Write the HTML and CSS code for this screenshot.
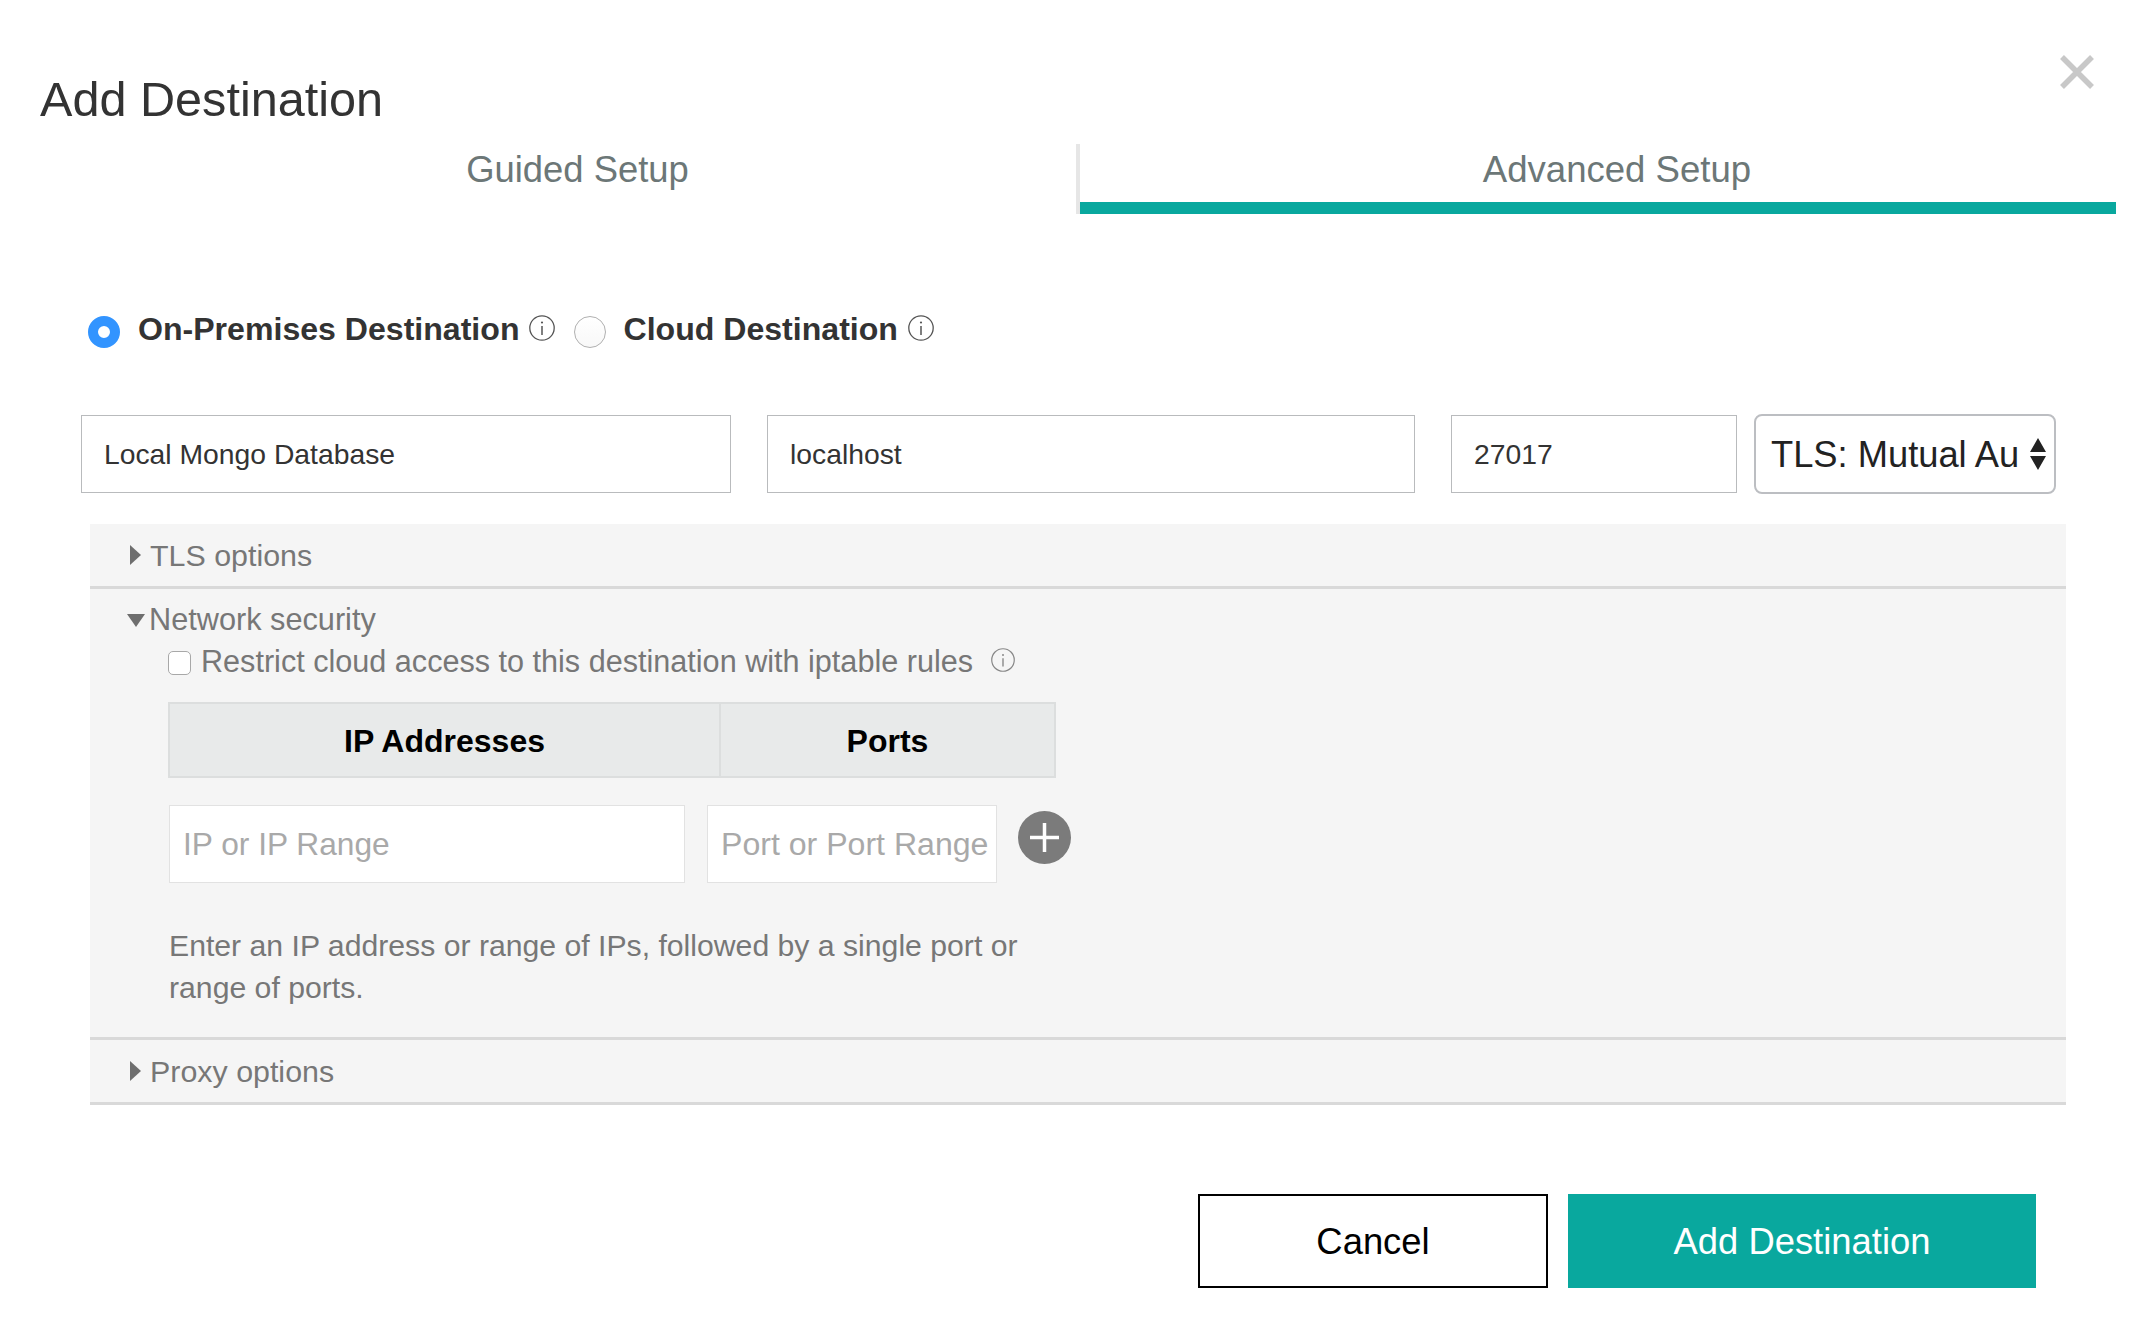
FILE: index.html
```html
<!DOCTYPE html>
<html lang="en">
<head>
  <meta charset="UTF-8" />
  <title>Add Destination</title>
  <link rel="stylesheet" href="styles.css">
</head>
<body>
  <div class="dialog">
    <button class="close-btn" aria-label="Close">
      <svg width="34" height="34" viewBox="0 0 34 34"><path d="M2 2 L32 32 M32 2 L2 32" stroke="#c8c8c8" stroke-width="5.5" fill="none"/></svg>
    </button>
    <h1 class="title">Add Destination</h1>

    <div class="tabs">
      <div class="tab tab-guided">Guided Setup</div>
      <div class="tab tab-advanced">Advanced Setup</div>
    </div>

    <div class="radio-row">
      <input class="radio" type="radio" name="kind" checked />
      <label class="radio-label">On-Premises Destination</label>
      <svg class="info" viewBox="0 0 26 26"><circle cx="13" cy="13" r="12.2" fill="none" stroke="#555" stroke-width="1.3"/><path d="M13 11 V20" stroke="#555" stroke-width="1.5"/><circle cx="13" cy="7.5" r="1.1" fill="#555"/></svg>
      <input class="radio radio-second" type="radio" name="kind" />
      <label class="radio-label">Cloud Destination</label>
      <svg class="info" viewBox="0 0 26 26"><circle cx="13" cy="13" r="12.2" fill="none" stroke="#555" stroke-width="1.3"/><path d="M13 11 V20" stroke="#555" stroke-width="1.5"/><circle cx="13" cy="7.5" r="1.1" fill="#555"/></svg>
    </div>

    <div class="fields">
      <input class="field field-name" type="text" value="Local Mongo Database" />
      <input class="field field-host" type="text" value="localhost" />
      <input class="field field-port" type="text" value="27017" />
      <div class="select-wrap">
        <select class="tls-select">
          <option>TLS: Mutual Authentication</option>
        </select>
        <svg class="select-arrows" width="18" height="32" viewBox="0 0 18 32"><path d="M9 0 L17 14 H1 Z M1 18 H17 L9 32 Z" fill="#222"/></svg>
      </div>
    </div>

    <div class="panel">
      <div class="section section-closed">
        <span class="arrow-right"></span>TLS options
      </div>

      <div class="section section-open">
        <div class="section-head"><span class="arrow-down"></span>Network security</div>
        <div class="restrict">
          <input class="check" type="checkbox" />
          <span class="restrict-text">Restrict cloud access to this destination with iptable rules</span>
          <svg class="info info-small" viewBox="0 0 26 26"><circle cx="13" cy="13" r="12.2" fill="none" stroke="#888" stroke-width="1.3"/><path d="M13 11 V20" stroke="#888" stroke-width="1.5"/><circle cx="13" cy="7.5" r="1.1" fill="#888"/></svg>
        </div>

        <div class="rules-head">
          <div class="rules-ip">IP Addresses</div>
          <div class="rules-port">Ports</div>
        </div>

        <div class="rules-inputs">
          <input class="rule-input rule-ip" type="text" placeholder="IP or IP Range" />
          <input class="rule-input rule-port" type="text" placeholder="Port or Port Range" />
          <button class="add-rule" aria-label="Add">
            <svg width="53" height="53" viewBox="0 0 53 53"><circle cx="26.5" cy="26.5" r="26.5" fill="#7b7b7b"/><path d="M26.5 12 V41 M12 26.5 H41" stroke="#fff" stroke-width="3.5"/></svg>
          </button>
        </div>

        <p class="hint">Enter an IP address or range of IPs, followed by a single port or range of ports.</p>
      </div>

      <div class="section section-closed">
        <span class="arrow-right"></span>Proxy options
      </div>
    </div>

    <div class="actions">
      <button class="btn btn-cancel">Cancel</button>
      <button class="btn btn-add">Add Destination</button>
    </div>
  </div>
</body>
</html>
```

FILE: styles.css
```css
/* Page */
body {
  margin: 0;
  background: #fff;
  font-family: "Liberation Sans", Arial, sans-serif;
  color: #333;
}

.dialog {
  position: relative;
  width: 2154px;
  height: 1330px;
  overflow: hidden;
  padding-top: 71px;
  box-sizing: border-box;
}

.close-btn {
  position: absolute;
  left: 2060px;
  top: 55px;
  width: 34px;
  height: 34px;
  padding: 0;
  border: none;
  background: none;
}

.title {
  margin: 0 0 17px 40px;
  font-size: 48.6px;
  font-weight: 400;
  line-height: 56px;
  color: #333;
}

/* Tabs */
.tabs {
  display: flex;
  height: 70px;
}

.tab {
  box-sizing: border-box;
  height: 70px;
  font-size: 36.4px;
  line-height: 51px;
  text-align: center;
  color: #6c7777;
}

.tab-guided {
  width: 1001px;
  margin-left: 79px;
  border-right: 4px solid #e6e6e6;
}

.tab-advanced {
  width: 1036px;
  padding-left: 38px;
  font-size: 36.6px;
  border-bottom: 12px solid #09a89e;
}

/* Radio row */
.radio-row {
  display: flex;
  align-items: flex-start;
  height: 40px;
  margin: 102px 0 0 88px;
}

.radio {
  appearance: none;
  box-sizing: border-box;
  flex: none;
  width: 32px;
  height: 32px;
  margin: 0 18px 0 0;
  border: 1px solid #b0b0b0;
  border-radius: 50%;
  background: linear-gradient(#fff, #f8f8f8);
}

.radio:checked {
  border: 10px solid #3294ff;
  background: #fff;
}

.radio-second {
  margin: 0 17px 0 19px;
}

.radio-label {
  margin-top: -3px;
  font-size: 32.1px;
  font-weight: 700;
  line-height: 32px;
  color: #333;
}

.info {
  flex: none;
  width: 26px;
  height: 26px;
  margin: -1px 0 0 10px;
}

/* Name, host, port, TLS */
.fields {
  display: flex;
  align-items: center;
  height: 80px;
  margin: 58px 0 0 81px;
}

.field {
  box-sizing: border-box;
  height: 78px;
  padding: 0 22px;
  border: 1px solid #b9bbbd;
  border-radius: 0;
  outline: none;
  font-family: inherit;
  font-size: 28.3px;
  color: #333;
  background: #fff;
}

.field-name {
  width: 650px;
  margin-right: 36px;
}

.field-host {
  width: 648px;
  margin-right: 36px;
}

.field-port {
  width: 286px;
  margin-right: 17px;
}

.select-wrap {
  position: relative;
  width: 302px;
  height: 80px;
}

.tls-select {
  appearance: none;
  box-sizing: border-box;
  width: 100%;
  height: 100%;
  padding: 0 35px 0 15px;
  border: 2px solid #bcbec2;
  border-radius: 8px;
  outline: none;
  font-family: inherit;
  font-size: 36.3px;
  color: #222;
  background: #fff;
}

.select-arrows {
  position: absolute;
  right: 9px;
  top: 24px;
}

/* Grey panel */
.panel {
  width: 1976px;
  margin: 30px 0 0 90px;
  background: #f5f5f5;
  color: #777;
  font-size: 30.4px;
}

.section {
  border-bottom: 3px solid #d9d9d9;
}

.section-closed {
  display: flex;
  align-items: center;
  box-sizing: border-box;
  height: 65px;
  padding-left: 40px;
}

.arrow-right {
  flex: none;
  width: 0;
  height: 0;
  margin-right: 9px;
  border-top: 10px solid transparent;
  border-bottom: 10px solid transparent;
  border-left: 11px solid #6e6e6e;
}

.arrow-down {
  display: inline-block;
  width: 0;
  height: 0;
  margin: 0 4px 3px -3px;
  border-left: 9px solid transparent;
  border-right: 9px solid transparent;
  border-top: 13px solid #6e6e6e;
}

.section-open {
  height: 451px;
  box-sizing: border-box;
  padding: 13px 0 0 40px;
}

.section-head {
  font-size: 30.7px;
  line-height: 36px;
}

.restrict {
  display: flex;
  align-items: center;
  height: 44px;
  margin: 1px 0 0 38px;
}

.check {
  appearance: none;
  box-sizing: border-box;
  flex: none;
  width: 23px;
  height: 24px;
  margin: 4px 10px 0 0;
  border: 1px solid #a8a8a8;
  border-radius: 5px;
  background: #fff;
}

.restrict-text {
  font-size: 30.6px;
}

.info-small {
  width: 24px;
  height: 24px;
  margin: -2px 0 0 18px;
}

/* Rule table */
.rules-head {
  display: flex;
  box-sizing: border-box;
  width: 888px;
  height: 76px;
  margin: 19px 0 0 38px;
  border: 2px solid #dcdede;
  background: #e8eaea;
  color: #000;
  font-size: 32px;
  font-weight: 700;
  line-height: 74px;
  text-align: center;
}

.rules-ip {
  width: 549px;
  border-right: 2px solid #dcdede;
}

.rules-port {
  flex: 1;
}

.rules-inputs {
  display: flex;
  align-items: flex-start;
  margin: 27px 0 0 39px;
}

.rule-input {
  box-sizing: border-box;
  height: 78px;
  padding: 0 0 0 13px;
  border: 1px solid #e2e2e2;
  border-radius: 0;
  outline: none;
  font-family: inherit;
  font-size: 31.7px;
  background: #fff;
}

.rule-input::placeholder {
  color: #a9a9a9;
  opacity: 1;
}

.rule-ip {
  width: 516px;
  margin-right: 22px;
}

.rule-port {
  width: 290px;
  margin-right: 21px;
  font-size: 32.1px;
}

.add-rule {
  width: 53px;
  height: 53px;
  margin-top: 6px;
  padding: 0;
  border: none;
  background: none;
}

.hint {
  width: 880px;
  margin: 42px 0 0 39px;
  font-size: 30.2px;
  line-height: 42px;
}

/* Footer buttons */
.actions {
  display: flex;
  margin: 89px 0 0 1198px;
}

.btn {
  box-sizing: border-box;
  height: 94px;
  padding-top: 2px;
  font-family: inherit;
  font-size: 36.4px;
  border-radius: 0;
}

.btn-cancel {
  width: 350px;
  margin-right: 20px;
  border: 2px solid #000;
  background: #fff;
  color: #000;
}

.btn-add {
  width: 468px;
  border: none;
  background: #09a89e;
  color: #fff;
}
```
